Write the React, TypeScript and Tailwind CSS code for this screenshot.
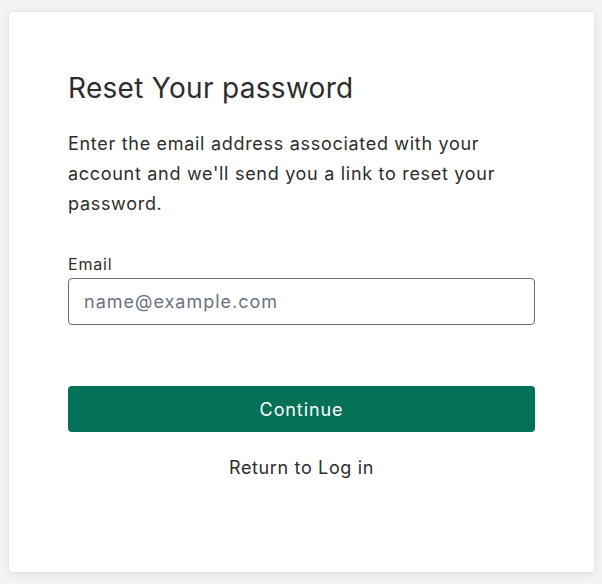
export default function App() {
  return (
    <div
      className="min-h-[584px] bg-[#f4f4f4] px-2 pt-[11px] pb-[11px]"
      style={{ fontFamily: "Inter, 'Noto Sans', sans-serif" }}
    >
      <div className="w-[587px] h-[562px] bg-white rounded-[4px] border border-[#e6e6e6] shadow-[0_2px_10px_rgba(0,0,0,0.08)] px-[59px] pt-[58px]">
        <h1 className="text-[28px] leading-[36px] tracking-[0.3px] text-[#2d2d2d] font-normal">Reset Your password</h1>
        <p className="mt-[23px] text-[18px] leading-[30px] tracking-[0.7px] text-[#2d2d2d]">
          Enter the email address associated with your account and we'll send you a link to reset your password.
        </p>
        <label className="block mt-[35px] text-[16px] leading-[20px] tracking-[0.8px] text-[#2d2d2d]">Email</label>
        <input
          type="email"
          placeholder="name@example.com"
          className="mt-[4px] w-full h-[47px] rounded-[4px] border border-[#6b6b6b] px-[15px] text-[18px] tracking-[1px] text-[#2d2d2d] placeholder-[#6b7280] outline-none"
        />
        <button className="mt-[61px] w-full h-[46px] rounded-[4px] bg-[#037157] text-white text-[18px] tracking-[0.9px]">
          Continue
        </button>
        <div className="mt-[24px] text-center text-[18px] leading-[24px] tracking-[0.65px] text-[#2d2d2d]">Return to Log in</div>
      </div>
    </div>
  );
}
